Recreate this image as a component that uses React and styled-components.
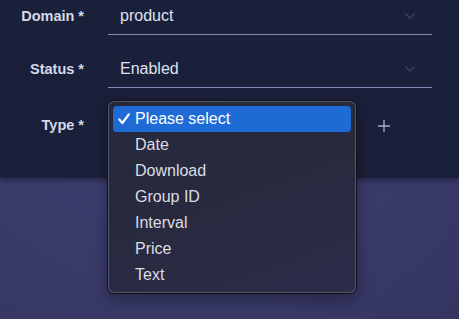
import React from 'react';
import styled, { createGlobalStyle } from 'styled-components';

const GlobalStyle = createGlobalStyle`
  html, body {
    margin: 0;
    padding: 0;
    height: 100%;
    background: radial-gradient(ellipse at 40% 30%, #3e3f70 0%, #393a68 60%, #34355f 100%);
    font-family: "Liberation Sans", Arial, sans-serif;
    overflow: hidden;
  }
`

const Panel = styled.div`
  background-color: #1a2039;
  height: 178px;
  box-shadow: 0 2px 6px rgba(10, 12, 30, 0.45);
`

const Form = styled.div`
  display: grid;
  grid-template-columns: 84px 324px;
  column-gap: 24px;
  row-gap: 18px;
  align-items: end;
`

const Label = styled.div`
  text-align: right;
  font-size: 14.5px;
  font-weight: bold;
  color: #d4d8ea;
  height: 35px;
  line-height: 33px;
  padding-top: ${p => p.$shift || 0}px;
  box-sizing: border-box;
`

const Field = styled.div`
  height: 34px;
  border-bottom: 1px solid #8489b3;
  display: flex;
  align-items: center;
  justify-content: space-between;
  padding: 0 16px 0 12px;
`

const Value = styled.span`
  font-size: 16px;
  color: #dfe2f0;
  margin-top: -2px;
`

const Chevron = styled.svg`
  width: 12px;
  height: 8px;
  margin-top: -2px;
`

const TypeRow = styled.div`
  height: 34px;
  display: flex;
  align-items: center;
`

const SelectBox = styled.div`
  position: relative;
  width: 248px;
  height: 34px;
`

const AddButton = styled.button`
  margin-left: 22px;
  padding: 0;
  border: 0;
  background: none;
  display: flex;
  align-items: center;
  margin-top: 3px;
`

const Plus = styled.svg`
  width: 12px;
  height: 12px;
`

const Menu = styled.ul`
  position: absolute;
  left: 0;
  top: -6px;
  width: 238px;
  margin: 0;
  padding: 5px;
  list-style: none;
  border-radius: 6px;
  background: linear-gradient(160deg, #26283a 0%, #282a40 55%, #2c2d4a 100%);
  box-shadow: 0 0 0 1px #0e0f18, inset 0 0 0 1px #55576d, 0 6px 16px rgba(0, 0, 0, 0.35);
  z-index: 5;
`

const Item = styled.li`
  height: 26px;
  display: flex;
  align-items: center;
  border-radius: 4px;
  padding-left: 5px;
  font-size: 16px;
  color: ${p => (p.$active ? '#ffffff' : '#dcdde4')};
  background: ${p => (p.$active ? '#1e6bd5' : 'transparent')};
`

const CheckSlot = styled.span`
  width: 17px;
  display: flex;
  align-items: center;
`

const CheckMark = styled.svg`
  width: 12px;
  height: 12px;
`

const options = ['Please select', 'Date', 'Download', 'Group ID', 'Interval', 'Price', 'Text'];

const Down = () => (
  <Chevron viewBox="0 0 12 8">
    <path d="M1 1.5 L6 6 L11 1.5" fill="none" stroke="#384059" strokeWidth="1.6" />
  </Chevron>
);

export default function App() {
  return (
    <>
      <GlobalStyle />
      <Panel>
        <Form>
          <Label>Domain *</Label>
          <Field>
            <Value>product</Value>
            <Down />
          </Field>

          <Label>Status *</Label>
          <Field>
            <Value>Enabled</Value>
            <Down />
          </Field>

          <Label $shift={3}>Type *</Label>
          <TypeRow>
            <SelectBox>
              <Menu>
                {options.map((o, i) => (
                  <Item key={o} $active={i === 0}>
                    <CheckSlot>
                      {i === 0 && (
                        <CheckMark viewBox="0 0 12 12">
                          <path d="M1.3 6.6 L4.4 10 L10.8 1.4" fill="none" stroke="#ffffff" strokeWidth="2.2" strokeLinecap="round" strokeLinejoin="round" />
                        </CheckMark>
                      )}
                    </CheckSlot>
                    {o}
                  </Item>
                ))}
              </Menu>
            </SelectBox>
            <AddButton>
              <Plus viewBox="0 0 12 12">
                <path d="M6 0 V12 M0 6 H12" stroke="#a3a8c8" strokeWidth="1.4" />
              </Plus>
            </AddButton>
          </TypeRow>
        </Form>
      </Panel>
    </>
  );
}
